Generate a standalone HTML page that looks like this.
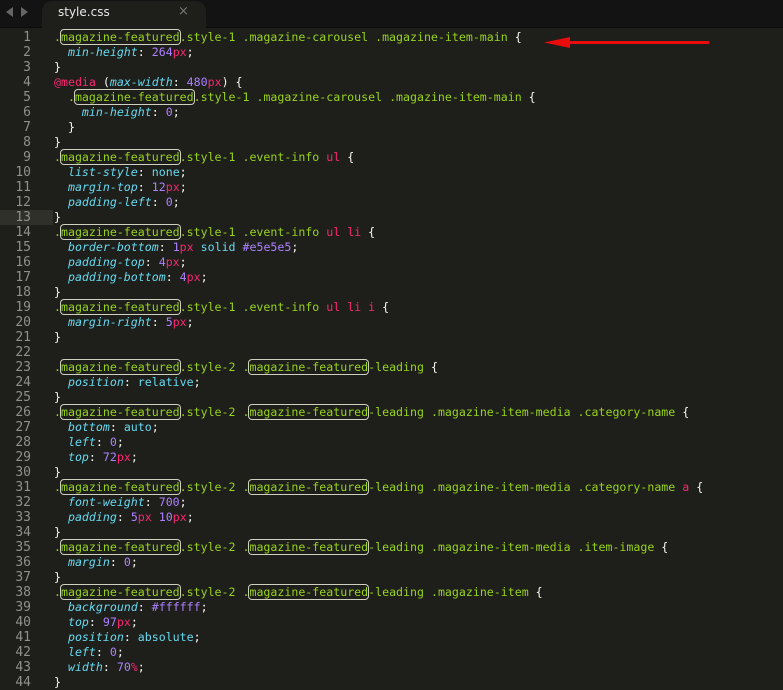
<!DOCTYPE html>
<html><head><meta charset="utf-8"><style>
html,body{margin:0;padding:0;width:783px;height:678px;overflow:hidden;background:#1e1f1b;}
#tabbar{position:absolute;left:0;top:0;width:783px;height:27px;background:#131313;border-bottom:1px solid #0c0c0c;}
#tab{position:absolute;left:42px;top:1px;width:164px;height:27px;background:#1e1f1b;border-radius:10px 10px 0 0;}
#tabtxt{position:absolute;left:58px;top:5px;font:12px "DejaVu Sans","Liberation Sans",sans-serif;color:#e8e8e8;}
#close{position:absolute;left:178px;top:4px;font:13px "DejaVu Sans",sans-serif;color:#777;}
.navl,.navr{position:absolute;top:7px;width:0;height:0;border-top:5px solid transparent;border-bottom:5px solid transparent;}
.navl{left:6px;border-right:7px solid #666;}
.navr{left:21px;border-left:7px solid #666;}
#gut{position:absolute;left:0;top:30px;width:53px;}
#gut div{height:15px;line-height:15px;text-align:right;width:31px;font:13px "DejaVu Sans Mono","Liberation Mono",monospace;color:#8f908a;}
#hl{position:absolute;left:0;top:210px;width:53px;height:15px;background:#30302b;}
#code{position:absolute;left:54px;top:30px;font:11.6px "DejaVu Sans Mono","Liberation Mono",monospace;color:#f8f8f2;}
#code div{height:15px;line-height:15px;white-space:pre;}
.g{color:#97d21c}.p{color:#66d9ef;font-style:italic}.v{color:#66d9ef}.n{color:#ae81ff}.u{color:#f92672}.t{color:#f92672}
.b{border-radius:3px;box-shadow:0 0 0 1px #d0d0c0;}
</style></head><body>
<div id="tabbar"><div class="navl"></div><div class="navr"></div>
<div id="tab"></div><div id="tabtxt">style.css</div><div id="close">×</div></div>
<div id="hl"></div>
<div id="gut"><div>1</div><div>2</div><div>3</div><div>4</div><div>5</div><div>6</div><div>7</div><div>8</div><div>9</div><div>10</div><div>11</div><div>12</div><div>13</div><div>14</div><div>15</div><div>16</div><div>17</div><div>18</div><div>19</div><div>20</div><div>21</div><div>22</div><div>23</div><div>24</div><div>25</div><div>26</div><div>27</div><div>28</div><div>29</div><div>30</div><div>31</div><div>32</div><div>33</div><div>34</div><div>35</div><div>36</div><div>37</div><div>38</div><div>39</div><div>40</div><div>41</div><div>42</div><div>43</div><div>44</div></div>
<div id="code"><div><span class="g">.<span class="b">magazine-featured</span>.style-1 .magazine-carousel .magazine-item-main</span> {</div><div>  <span class="p">min-height</span>: <span class="n">264</span><span class="u">px</span>;</div><div>}</div><div><span class="u">@media</span> (<span class="p">max-width</span>: <span class="n">480</span><span class="u">px</span>) {</div><div>  <span class="g">.<span class="b">magazine-featured</span>.style-1 .magazine-carousel .magazine-item-main</span> {</div><div>    <span class="p">min-height</span>: <span class="n">0</span>;</div><div>  }</div><div>}</div><div><span class="g">.<span class="b">magazine-featured</span>.style-1 .event-info </span><span class="t">ul</span> {</div><div>  <span class="p">list-style</span>: <span class="v">none</span>;</div><div>  <span class="p">margin-top</span>: <span class="n">12</span><span class="u">px</span>;</div><div>  <span class="p">padding-left</span>: <span class="n">0</span>;</div><div>}</div><div><span class="g">.<span class="b">magazine-featured</span>.style-1 .event-info </span><span class="t">ul li</span> {</div><div>  <span class="p">border-bottom</span>: <span class="n">1</span><span class="u">px</span> <span class="v">solid</span> <span class="n">#e5e5e5</span>;</div><div>  <span class="p">padding-top</span>: <span class="n">4</span><span class="u">px</span>;</div><div>  <span class="p">padding-bottom</span>: <span class="n">4</span><span class="u">px</span>;</div><div>}</div><div><span class="g">.<span class="b">magazine-featured</span>.style-1 .event-info </span><span class="t">ul li i</span> {</div><div>  <span class="p">margin-right</span>: <span class="n">5</span><span class="u">px</span>;</div><div>}</div><div> </div><div><span class="g">.<span class="b">magazine-featured</span>.style-2 .<span class="b">magazine-featured</span>-leading</span> {</div><div>  <span class="p">position</span>: <span class="v">relative</span>;</div><div>}</div><div><span class="g">.<span class="b">magazine-featured</span>.style-2 .<span class="b">magazine-featured</span>-leading .magazine-item-media .category-name</span> {</div><div>  <span class="p">bottom</span>: <span class="v">auto</span>;</div><div>  <span class="p">left</span>: <span class="n">0</span>;</div><div>  <span class="p">top</span>: <span class="n">72</span><span class="u">px</span>;</div><div>}</div><div><span class="g">.<span class="b">magazine-featured</span>.style-2 .<span class="b">magazine-featured</span>-leading .magazine-item-media .category-name </span><span class="t">a</span> {</div><div>  <span class="p">font-weight</span>: <span class="n">700</span>;</div><div>  <span class="p">padding</span>: <span class="n">5</span><span class="u">px</span> <span class="n">10</span><span class="u">px</span>;</div><div>}</div><div><span class="g">.<span class="b">magazine-featured</span>.style-2 .<span class="b">magazine-featured</span>-leading .magazine-item-media .item-image</span> {</div><div>  <span class="p">margin</span>: <span class="n">0</span>;</div><div>}</div><div><span class="g">.<span class="b">magazine-featured</span>.style-2 .<span class="b">magazine-featured</span>-leading .magazine-item</span> {</div><div>  <span class="p">background</span>: <span class="n">#ffffff</span>;</div><div>  <span class="p">top</span>: <span class="n">97</span><span class="u">px</span>;</div><div>  <span class="p">position</span>: <span class="v">absolute</span>;</div><div>  <span class="p">left</span>: <span class="n">0</span>;</div><div>  <span class="p">width</span>: <span class="n">70</span><span class="u">%</span>;</div><div>}</div></div>
<svg style="position:absolute;left:0;top:0" width="783" height="678">
<line x1="570" y1="42.5" x2="709" y2="42.5" stroke="#e80c0c" stroke-width="3"/>
<polygon points="544,42.5 570,37 570,48" fill="#e80c0c"/>
</svg>
</body></html>
